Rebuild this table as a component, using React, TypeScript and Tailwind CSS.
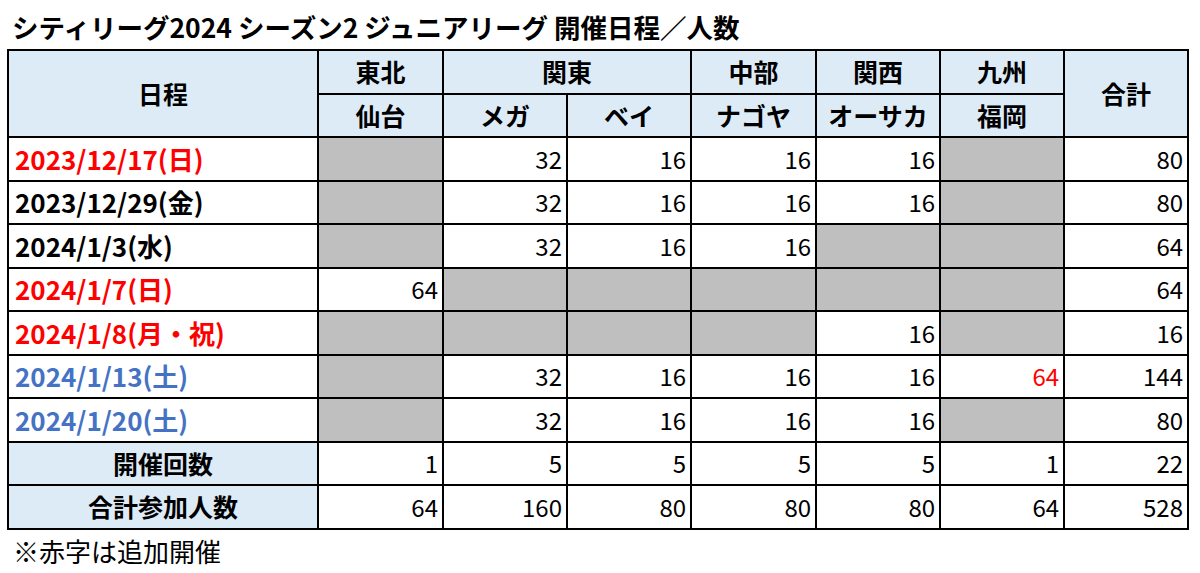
const GRAY = null;

type Cell = number | null | { v: number; red: true };

const rows: { date: string; color: string; cells: Cell[]; total: number }[] = [
  { date: "2023/12/17(日)", color: "text-[#ff0000]", cells: [null, 32, 16, 16, 16, null], total: 80 },
  { date: "2023/12/29(金)", color: "text-black", cells: [null, 32, 16, 16, 16, null], total: 80 },
  { date: "2024/1/3(水)", color: "text-black", cells: [null, 32, 16, 16, null, null], total: 64 },
  { date: "2024/1/7(日)", color: "text-[#ff0000]", cells: [64, null, null, null, null, null], total: 64 },
  { date: "2024/1/8(月・祝)", color: "text-[#ff0000]", cells: [null, null, null, null, 16, null], total: 16 },
  { date: "2024/1/13(土)", color: "text-[#4472c4]", cells: [null, 32, 16, 16, 16, { v: 64, red: true }], total: 144 },
  { date: "2024/1/20(土)", color: "text-[#4472c4]", cells: [null, 32, 16, 16, 16, null], total: 80 },
];

const summary = [
  { label: "開催回数", cells: [1, 5, 5, 5, 5, 1], total: 22 },
  { label: "合計参加人数", cells: [64, 160, 80, 80, 80, 64], total: 528 },
];

const td = "border-2 border-black h-[43.5px] p-0";
const num = "text-right pr-[4px] text-[24px]";
const head = "border-2 border-black bg-[#ddebf7] font-bold text-center p-0 text-[25px]";

function NumCell({ c }: { c: Cell }) {
  if (c === GRAY) return <td className={`${td} bg-[#bfbfbf]`} />;
  if (typeof c === "number") return <td className={`${td} ${num}`}>{c}</td>;
  return <td className={`${td} ${num} text-[#ff0000]`}>{c.v}</td>;
}

export default function App() {
  return (
    <div
      className="w-[1200px] h-[573px] bg-white text-black overflow-hidden"
      style={{ fontFamily: '"Noto Sans CJK JP", "Noto Sans", sans-serif' }}
    >
      <div className="h-[49px] flex items-center pl-[12px] pt-[6px] text-[26.5px] font-bold leading-none">
        シティリーグ2024 シーズン2 ジュニアリーグ 開催日程／人数
      </div>
      <table className="ml-[7px] border-collapse table-fixed w-[1180px] leading-none">
        <colgroup>
          <col className="w-[310px]" />
          <col className="w-[125px]" />
          <col className="w-[124px]" />
          <col className="w-[124px]" />
          <col className="w-[125px]" />
          <col className="w-[124px]" />
          <col className="w-[124px]" />
          <col className="w-[124px]" />
        </colgroup>
        <thead>
          <tr className="h-[43.5px]">
            <th rowSpan={2} className={head}>日程</th>
            <th className={head}>東北</th>
            <th colSpan={2} className={head}>関東</th>
            <th className={head}>中部</th>
            <th className={head}>関西</th>
            <th className={head}>九州</th>
            <th rowSpan={2} className={head}>合計</th>
          </tr>
          <tr className="h-[43.5px]">
            <th className={head}>仙台</th>
            <th className={head}>メガ</th>
            <th className={head}>ベイ</th>
            <th className={head}>ナゴヤ</th>
            <th className={head}>オーサカ</th>
            <th className={head}>福岡</th>
          </tr>
        </thead>
        <tbody>
          {rows.map((r) => (
            <tr key={r.date}>
              <td className={`${td} font-bold text-left pl-[6px] text-[26px] ${r.color}`}>{r.date}</td>
              {r.cells.map((c, i) => (
                <NumCell key={i} c={c} />
              ))}
              <td className={`${td} ${num}`}>{r.total}</td>
            </tr>
          ))}
          {summary.map((s) => (
            <tr key={s.label}>
              <td className={`${td} bg-[#ddebf7] font-bold text-center text-[25px]`}>{s.label}</td>
              {s.cells.map((c, i) => (
                <NumCell key={i} c={c} />
              ))}
              <td className={`${td} ${num}`}>{s.total}</td>
            </tr>
          ))}
        </tbody>
      </table>
      <div className="pl-[13px] pt-[8px] text-[26px] leading-none">※赤字は追加開催</div>
    </div>
  );
}
